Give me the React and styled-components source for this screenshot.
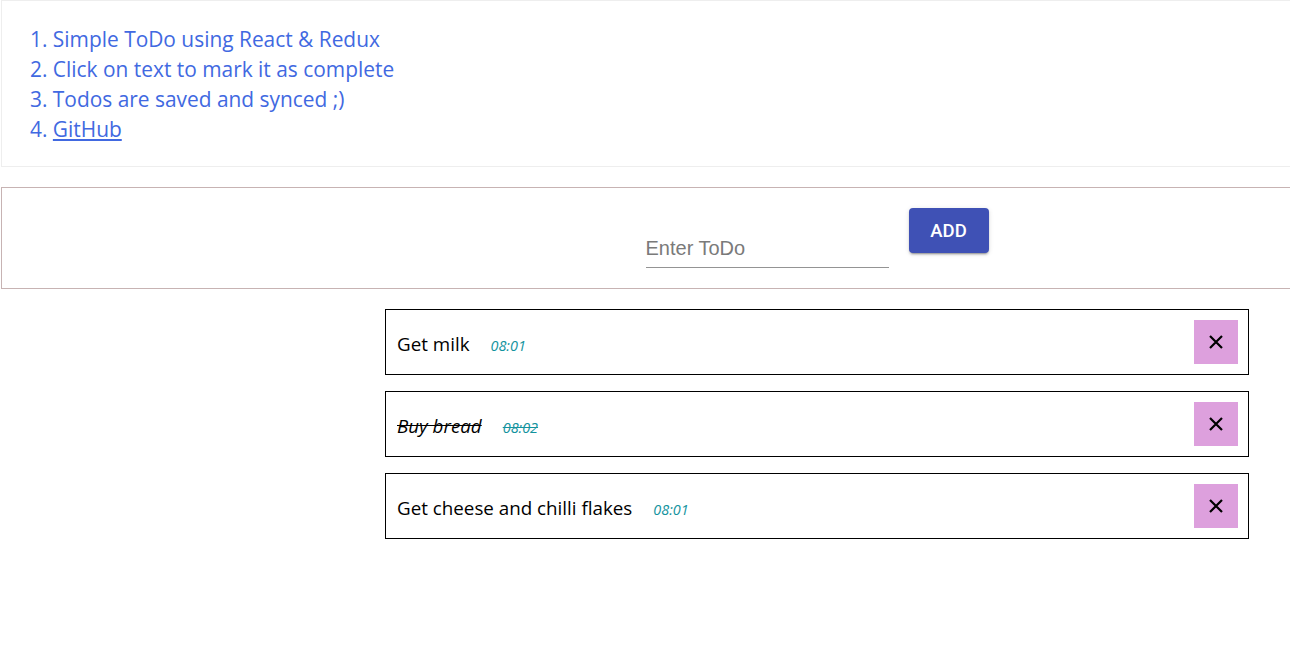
import React from 'react'
import styled, { createGlobalStyle } from 'styled-components'

const GlobalStyle = createGlobalStyle`
  html, body {
    margin: 0;
    padding: 0;
    overflow: hidden;
    background: #fff;
  }
`

const Page = styled.div`
  width: 1632px;
  padding-left: 1px;
  font-family: 'Open Sans', 'Noto Sans', sans-serif;
`

const Info = styled.section`
  border: 1px solid #eeeeee;
  box-sizing: border-box;
  height: 167px;
  padding: 23px 28px;
`

const InfoList = styled.ol`
  margin: 0;
  padding: 0;
  list-style-position: inside;
  color: royalblue;
  font-size: 20.9px;
  line-height: 30px;
`

const GitLink = styled.a`
  color: royalblue;
  text-decoration: underline;
`

const Form = styled.form`
  margin-top: 20px;
  border: 1px solid #c7b3b3;
  padding: 20px 0;
  display: flex;
  justify-content: center;
  align-items: flex-start;
  gap: 20px;
`

const Input = styled.input`
  margin-top: 24px;
  width: 243px;
  border: none;
  border-bottom: 1px solid #949494;
  outline: none;
  padding: 5px 0 7px;
  font-family: 'Liberation Sans', Arial, sans-serif;
  font-size: 20px;
  color: #333;
  background: transparent;

  &::placeholder {
    color: #7a7a7a;
  }
`

const AddButton = styled.button`
  width: 80px;
  height: 45px;
  border: none;
  border-radius: 4px;
  background: #3f51b5;
  color: #fff;
  font-family: Roboto, 'Liberation Sans', sans-serif;
  font-weight: 500;
  font-size: 18.5px;
  box-shadow: 0 3px 1px -2px rgba(0, 0, 0, 0.2), 0 2px 2px 0 rgba(0, 0, 0, 0.14),
    0 1px 5px 0 rgba(0, 0, 0, 0.12);
  cursor: pointer;
`

const List = styled.ul`
  list-style: none;
  margin: 20px auto 0;
  padding: 0;
  width: 864px;
  display: flex;
  flex-direction: column;
  gap: 16px;
`

const Row = styled.li`
  display: flex;
  align-items: center;
  border: 1px solid #000;
  padding: 10px 10px 10px 11px;
`

const Title = styled.span`
  margin-top: 4px;
  font-size: 18.8px;
  color: #000;
  font-style: ${(p) => (p.$done ? 'italic' : 'normal')};
  text-decoration: ${(p) => (p.$done ? 'line-through' : 'none')};
  cursor: pointer;
`

const Time = styled.span`
  margin-left: 21px;
  margin-top: 7px;
  font-size: 14.4px;
  font-style: italic;
  color: #13939e;
  text-decoration: ${(p) => (p.$done ? 'line-through' : 'none')};
`

const DeleteButton = styled.button`
  margin-left: auto;
  width: 44px;
  height: 44px;
  border: none;
  padding: 0;
  background: plum;
  display: flex;
  align-items: center;
  justify-content: center;
  cursor: pointer;
`

const todos = [
  { id: 1, text: 'Get milk', time: '08:01', done: false },
  { id: 2, text: 'Buy bread', time: '08:02', done: true },
  { id: 3, text: 'Get cheese and chilli flakes', time: '08:01', done: false },
]

function CloseIcon() {
  return (
    <svg width="16" height="16" viewBox="0 0 16 16">
      <path d="M2 2 L14 14 M14 2 L2 14" stroke="#000" strokeWidth="2.2" />
    </svg>
  )
}

export default function App() {
  return (
    <Page>
      <GlobalStyle />
      <Info>
        <InfoList>
          <li>Simple ToDo using React &amp; Redux</li>
          <li>Click on text to mark it as complete</li>
          <li>Todos are saved and synced ;)</li>
          <li>
            <GitLink href="#">GitHub</GitLink>
          </li>
        </InfoList>
      </Info>

      <Form onSubmit={(e) => e.preventDefault()}>
        <Input placeholder="Enter ToDo" />
        <AddButton type="submit">ADD</AddButton>
      </Form>

      <List>
        {todos.map((t) => (
          <Row key={t.id}>
            <Title $done={t.done}>{t.text}</Title>
            <Time $done={t.done}>{t.time}</Time>
            <DeleteButton aria-label="delete">
              <CloseIcon />
            </DeleteButton>
          </Row>
        ))}
      </List>
    </Page>
  )
}
